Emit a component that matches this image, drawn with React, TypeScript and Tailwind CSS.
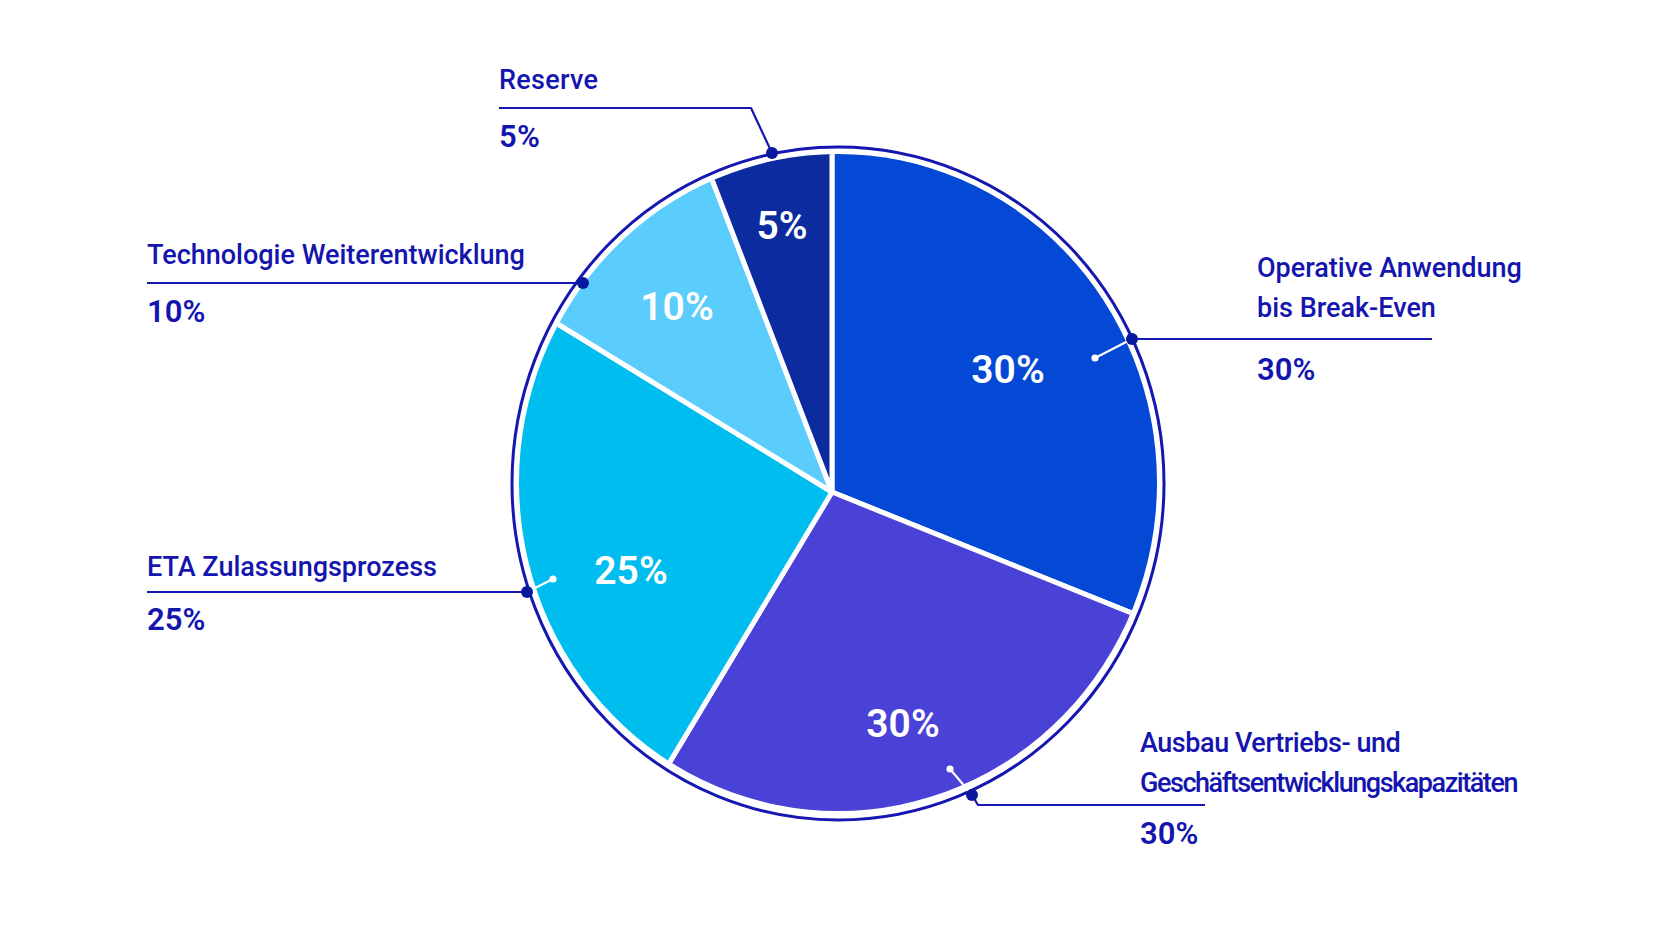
import React from "react";

type CalloutProps = {
  className?: string;
  title: React.ReactNode;
  pct: string;
  pctClassName?: string;
};

const Callout = ({ className = "", title, pct, pctClassName = "" }: CalloutProps) => {
  return (
    <div className={`flex flex-col text-[#1414ae] ${className}`}>
      <div className="text-[27px] font-medium leading-[40px] whitespace-nowrap">{title}</div>
      <div className={`text-[31px] font-semibold leading-none ${pctClassName}`}>{pct}</div>
    </div>
  );
};

// slice center and the angles (clockwise from 12 o'clock) as drawn in the chart
const CX = 832;
const CY = 492;
const R = 420;

const pt = (deg: number) => {
  const a = (deg * Math.PI) / 180;
  return `${(CX + R * Math.sin(a)).toFixed(1)} ${(CY - R * Math.cos(a)).toFixed(1)}`;
};

const slice = (from: number, to: number) =>
  `M${CX} ${CY} L${pt(from)} A${R} ${R} 0 0 1 ${pt(to)} Z`;

const slices = [
  { from: 0, to: 112, fill: "#0449d6" },
  { from: 112, to: 211, fill: "#4a41d7" },
  { from: 211, to: 301.5, fill: "#00bdef" },
  { from: 301.5, to: 339, fill: "#5acdfc" },
  { from: 339, to: 360, fill: "#0b2b9f" },
];

const inner = [
  { x: 1008, y: 369, t: "30%" },
  { x: 903, y: 723, t: "30%" },
  { x: 631, y: 570, t: "25%" },
  { x: 677, y: 306, t: "10%" },
  { x: 782, y: 225, t: "5%" },
];

const PieChart = () => {
  const line = "#1616b0";
  const dot = "#0a189e";
  return (
    <svg className="absolute inset-0 h-full w-full" viewBox="0 0 1672 941">
      <defs>
        <clipPath id="pie-clip">
          <ellipse cx="838" cy="482.5" rx="319" ry="328.5" />
        </clipPath>
      </defs>
      <g clipPath="url(#pie-clip)">
        {slices.map((s) => (
          <path
            key={s.from}
            d={slice(s.from, s.to)}
            fill={s.fill}
            stroke="#ffffff"
            strokeWidth="5"
            strokeLinejoin="round"
          />
        ))}
      </g>
      <ellipse cx="838" cy="483.5" rx="326" ry="336.5" fill="none" stroke={line} strokeWidth="3" />

      {inner.map((l) => (
        <text
          key={`${l.x}-${l.y}`}
          x={l.x}
          y={l.y + 14}
          textAnchor="middle"
          fill="#ffffff"
          className="font-['Roboto'] text-[39px] font-semibold"
        >
          {l.t}
        </text>
      ))}

      {/* white pointers inside the slices */}
      <g stroke="#ffffff" strokeWidth="2.2" fill="#ffffff">
        <line x1="527" y1="592" x2="553" y2="579" />
        <circle cx="553" cy="579" r="3.6" stroke="none" />
        <line x1="1132" y1="339" x2="1095" y2="358" />
        <circle cx="1095" cy="358" r="3.6" stroke="none" />
        <line x1="972" y1="795" x2="950" y2="769" />
        <circle cx="950" cy="769" r="3.6" stroke="none" />
      </g>

      {/* leader lines */}
      <g stroke={line} strokeWidth="2.2" fill="none" strokeLinejoin="round">
        <polyline points="499,108 751,108 772,153" />
        <line x1="147" y1="283" x2="583" y2="283" />
        <line x1="147" y1="592" x2="527" y2="592" />
        <line x1="1132" y1="339" x2="1432" y2="339" />
        <polyline points="972,795 978,805 1205,805" />
      </g>
      <g fill={dot}>
        <circle cx="772" cy="153" r="6" />
        <circle cx="583" cy="283" r="6" />
        <circle cx="527" cy="592" r="6" />
        <circle cx="1132" cy="339" r="6" />
        <circle cx="972" cy="795" r="6" />
      </g>
    </svg>
  );
};

export default function App() {
  return (
    <div className="relative h-[941px] w-[1672px] overflow-hidden bg-white font-['Roboto',sans-serif]">
      <PieChart />

      {/* callouts pinned to the chart */}
      <Callout
        className="absolute left-[499px] top-[60px] tracking-[0.3px]"
        title="Reserve"
        pct="5%"
        pctClassName="mt-[21px]"
      />
      <div className="absolute left-[147px] top-[235px] flex flex-col gap-[220px]">
        <Callout title="Technologie Weiterentwicklung" pct="10%" pctClassName="mt-[21px]" />
        <Callout title="ETA Zulassungsprozess" pct="25%" pctClassName="mt-[17px]" />
      </div>
      <Callout
        className="absolute left-[1257px] top-[248px]"
        title={
          <>
            <div>Operative Anwendung</div>
            <div>bis Break-Even</div>
          </>
        }
        pct="30%"
        pctClassName="mt-[26px]"
      />
      <Callout
        className="absolute left-[1140px] top-[723px]"
        title={
          <>
            <div className="tracking-[-0.45px]">Ausbau Vertriebs- und</div>
            <div className="tracking-[-1.45px]">Geschäftsentwicklungskapazitäten</div>
          </>
        }
        pct="30%"
        pctClassName="mt-[15px]"
      />
    </div>
  );
}
